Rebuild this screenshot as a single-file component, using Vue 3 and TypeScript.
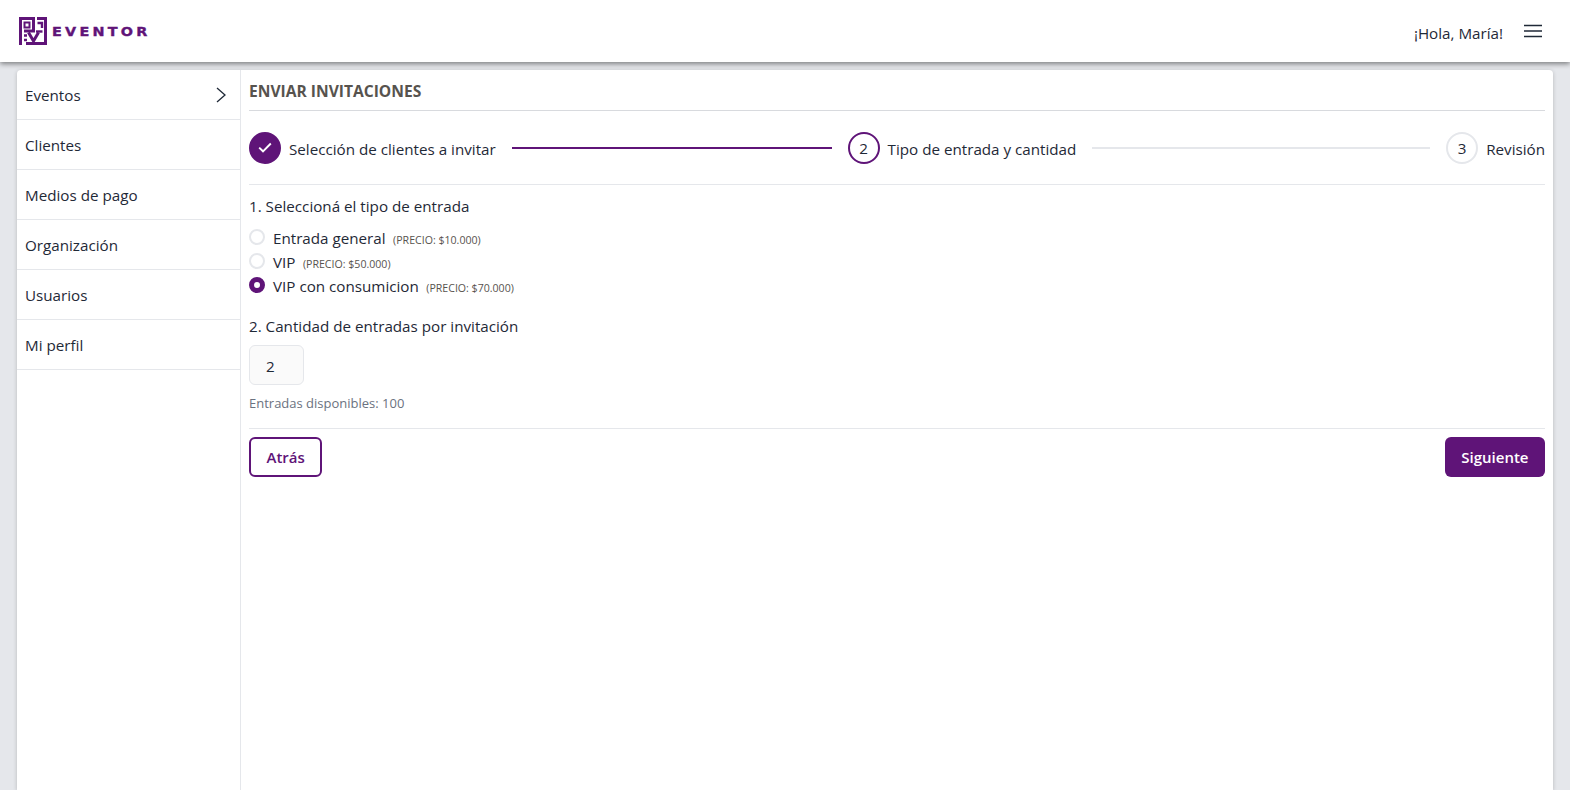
<script setup lang="ts">
const menu: string[] = ['Eventos', 'Clientes', 'Medios de pago', 'Organización', 'Usuarios', 'Mi perfil']
const tickets = [
  { name: 'Entrada general', price: '$10.000', checked: false },
  { name: 'VIP', price: '$50.000', checked: false },
  { name: 'VIP con consumicion', price: '$70.000', checked: true },
]
</script>

<template>
  <div class="page">
    <header class="topbar">
      <div class="logo">
        <svg class="logo-mark" width="28" height="28" viewBox="0 0 28 28" fill="none">
          <path d="M1.5 28V1.5H14.5V14H5" stroke="#5f1478" stroke-width="3" />
          <rect x="5.5" y="5.5" width="5" height="5" stroke="#5f1478" stroke-width="2" />
          <path d="M18 1.5H26.5V26.5H7" stroke="#5f1478" stroke-width="3" />
          <path d="M18.5 6H23V11" stroke="#5f1478" stroke-width="2.4" />
          <path d="M5 18.5H8M5 23H8" stroke="#5f1478" stroke-width="2.4" />
          <path d="M9.5 15.5L14.5 24L19.5 15.5" stroke="#5f1478" stroke-width="3" />
          <path d="M17 14.5H23.5" stroke="#5f1478" stroke-width="2.4" />
        </svg>
        <span class="logo-text">EVENTOR</span>
      </div>
      <div class="user">
        <span class="greeting">¡Hola, María!</span>
        <svg width="18" height="14" viewBox="0 0 18 14" fill="none">
          <path d="M0 1.5H18M0 7H18M0 12.5H18" stroke="#1f2937" stroke-width="1.5" />
        </svg>
      </div>
    </header>

    <main class="card">
      <nav class="sidebar">
        <a v-for="(item, i) in menu" :key="item" class="menu-item">
          <span>{{ item }}</span>
          <svg v-if="i === 0" width="10" height="16" viewBox="0 0 10 16" fill="none">
            <path d="M1 1L9 8L1 15" stroke="#1f2937" stroke-width="1.3" />
          </svg>
        </a>
      </nav>

      <section class="content">
        <h1 class="title">ENVIAR INVITACIONES</h1>

        <div class="stepper">
          <div class="step grow">
            <span class="dot done">
              <svg width="14" height="11" viewBox="0 0 14 11" fill="none">
                <path d="M1.2 5.6L5 9.3L12.8 1.5" stroke="#fff" stroke-width="1.9" />
              </svg>
            </span>
            <span class="step-label">Selección de clientes a invitar</span>
            <div class="line active"></div>
          </div>
          <div class="step grow">
            <span class="dot current">2</span>
            <span class="step-label">Tipo de entrada y cantidad</span>
            <div class="line"></div>
          </div>
          <div class="step">
            <span class="dot">3</span>
            <span class="step-label">Revisión</span>
          </div>
        </div>

        <div class="form">
          <p class="label">1. Seleccioná el tipo de entrada</p>
          <div class="options">
            <label v-for="t in tickets" :key="t.name" class="option">
              <span class="radio" :class="{ checked: t.checked }"></span>
              <span class="opt-name">{{ t.name }}</span>
              <span class="opt-price">(PRECIO: {{ t.price }})</span>
            </label>
          </div>

          <p class="label second">2. Cantidad de entradas por invitación</p>
          <div class="qty">2</div>
          <p class="hint">Entradas disponibles: 100</p>
        </div>

        <div class="actions">
          <button class="btn outline">Atrás</button>
          <button class="btn solid">Siguiente</button>
        </div>
      </section>
    </main>
  </div>
</template>

<style>
html, body { margin: 0; height: 100%; overflow: hidden; background: #e5e7eb; }
</style>

<style scoped>
.page {
  font-family: "Open Sans", "Noto Sans", sans-serif;
  font-size: 15.2px;
  color: #1f2937;
  height: 100vh;
  display: flex;
  flex-direction: column;
  background: #e5e7eb;
}
.topbar {
  height: 62px;
  flex: none;
  background: #fff;
  box-shadow: 0 2px 5px rgba(0, 0, 0, 0.45);
  display: flex;
  align-items: center;
  justify-content: space-between;
  padding: 0 28px 0 19px;
  position: relative;
  z-index: 1;
}
.logo { display: flex; align-items: center; gap: 5px; }
.logo-mark { display: block; }
.logo-text {
  font-family: "DejaVu Sans", sans-serif;
  font-weight: 700;
  font-size: 12.5px;
  letter-spacing: 2.8px;
  color: #5f1478;
  -webkit-text-stroke: 0.35px #5f1478;
  display: inline-block;
  transform: scaleX(1.15);
  transform-origin: left center;
  width: 84px;
}
.user { display: flex; align-items: center; gap: 21px; }
.greeting { padding-top: 3px; }
.card {
  flex: 1;
  margin: 8px 17px 0 17px;
  background: #fff;
  border-radius: 4px 4px 0 0;
  box-shadow: 0 1px 4px rgba(0, 0, 0, 0.2);
  display: flex;
  min-height: 0;
}
.sidebar { width: 223px; flex: none; border-right: 1px solid #e5e7eb; }
.menu-item {
  height: 50px;
  box-sizing: border-box;
  border-bottom: 1px solid #e5e7eb;
  display: flex;
  align-items: center;
  justify-content: space-between;
  padding: 0 14px 0 8px;
}
.content { flex: 1; min-width: 0; padding: 0 8px; }
.title {
  margin: 0;
  height: 41px;
  box-sizing: border-box;
  border-bottom: 1px solid #d8dade;
  font-size: 15.6px;
  font-weight: 700;
  color: #57534e;
  line-height: 43px;
}
.stepper {
  display: flex;
  align-items: center;
  gap: 16px;
  height: 74px;
  box-sizing: border-box;
  border-bottom: 1px solid #e5e7eb;
}
.step { display: flex; align-items: center; gap: 8px; flex: none; }
.step.grow { flex: 1; min-width: 0; }
.step-label { flex: none; padding-top: 2px; }
.dot {
  width: 32px;
  height: 32px;
  box-sizing: border-box;
  border: 2px solid #e5e7eb;
  border-radius: 50%;
  display: flex;
  align-items: center;
  justify-content: center;
  flex: none;
}
.dot.done { background: #5f1478; border-color: #5f1478; }
.dot.current { border-color: #5f1478; }
.line { flex: 1; height: 2px; background: #e5e7eb; margin-left: 8px; }
.line.active { background: #5f1478; }
.label { margin: 0; line-height: 20px; }
.form { padding-top: 11px; }
.options { margin-top: 10px; display: flex; flex-direction: column; }
.option { display: flex; align-items: center; height: 24px; }
.radio {
  width: 16px;
  height: 16px;
  box-sizing: border-box;
  border: 2px solid #e5e7eb;
  border-radius: 50%;
  margin: 0 8px 2px 0;
  flex: none;
}
.radio.checked { border: 5px solid #5f1478; background: #fff; }
.opt-price { font-size: 10.6px; color: #57534e; margin-left: 7.5px; padding-top: 3px; }
.label.second { margin-top: 18px; }
.qty {
  width: 55px;
  height: 40px;
  box-sizing: border-box;
  margin-top: 9px;
  border: 1px solid #e5e7eb;
  border-radius: 6px;
  background: #fafafa;
  padding-left: 16px;
  line-height: 41px;
}
.hint { margin: 8px 0 0; font-size: 13px; line-height: 20px; color: #6b7280; }
.actions {
  margin-top: 15px;
  padding-top: 8px;
  border-top: 1px solid #e5e7eb;
  display: flex;
  justify-content: space-between;
}
.btn {
  font-family: inherit;
  font-size: 15px;
  font-weight: 600;
  height: 40px;
  border-radius: 6px;
  box-sizing: border-box;
}
.outline { background: #fff; border: 2px solid #5f1478; color: #5f1478; padding: 0 15.5px; }
.solid { background: #5f1478; border: none; color: #fff; padding: 0 16.5px; }
</style>
